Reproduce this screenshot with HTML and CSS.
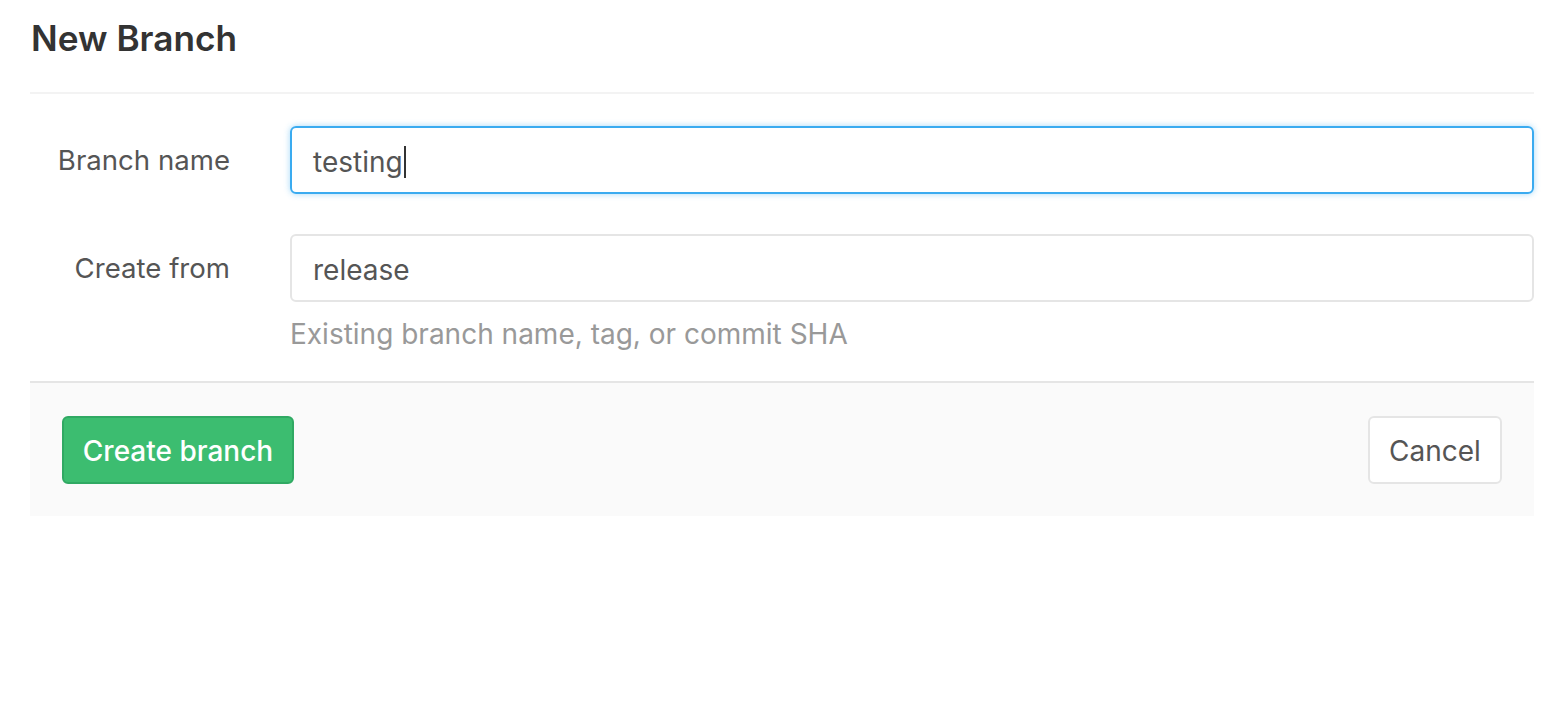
FILE: index.html
```html
<!DOCTYPE html>
<html>
<head>
<meta charset="utf-8">
<link rel="stylesheet" href="styles.css">
</head>
<body>
<div class="page">
  <h3 class="page-title">New Branch</h3>
  <hr class="divider">
  <form class="branch-form">
    <div class="form-group">
      <label class="control-label">Branch name</label>
      <div class="control">
        <div class="input focused"><span>testing</span><span class="caret"></span></div>
      </div>
    </div>
    <div class="form-group last">
      <label class="control-label">Create from</label>
      <div class="control">
        <div class="input"><span>release</span></div>
        <div class="help">Existing branch name, tag, or commit SHA</div>
      </div>
    </div>
    <div class="form-actions">
      <button type="button" class="btn btn-create">Create branch</button>
      <button type="button" class="btn btn-cancel">Cancel</button>
    </div>
  </form>
</div>
</body>
</html>
```

FILE: styles.css
```css
html, body {
  margin: 0;
  padding: 0;
  background: #fff;
}
body {
  font-family: Inter, "Liberation Sans", sans-serif;
  color: #555;
}
.page {
  margin: 0 22px 0 30px;
}
.page-title {
  margin: 0;
  padding-top: 18px;
  height: 56px;
  font-size: 35.2px;
  font-weight: 600;
  line-height: 40px;
  color: #333;
  padding-left: 1px;
}
.divider {
  margin: 18px 0 0;
  border: 0;
  border-top: 2px solid #f3f3f3;
}
.branch-form {
  margin-top: 32px;
}
.form-group {
  display: flex;
  align-items: flex-start;
  margin-bottom: 40px;
}
.form-group.last {
  margin-bottom: 30px;
}
.control-label {
  width: 200px;
  text-align: right;
  font-size: 27.6px;
  line-height: 67px;
  padding-top: 1px;
  color: #555;
  padding-right: 60px;
}
.control {
  flex: 1;
}
.input {
  box-sizing: border-box;
  height: 68px;
  border: 2px solid #e5e5e5;
  border-radius: 6px;
  padding: 3px 21px 0;
  font-size: 28px;
  line-height: 60px;
  color: #555;
  display: flex;
  align-items: center;
}
.input.focused {
  border-color: #3aabf0;
  box-shadow: 0 0 6px rgba(58, 171, 240, 0.45);
}
.caret {
  display: inline-block;
  width: 2px;
  height: 32px;
  background: #333;
  margin-left: 1px;
}
.help {
  margin-top: 15px;
  font-size: 28px;
  line-height: 34px;
  color: #999;
}
.form-actions {
  display: flex;
  justify-content: space-between;
  align-items: center;
  background: #fafafa;
  border-top: 2px solid #e5e5e5;
  padding: 33px 32px 32px;
}
.btn {
  box-sizing: border-box;
  height: 68px;
  border-radius: 6px;
  font-family: Inter, "Liberation Sans", sans-serif;
  font-size: 28px;
  padding: 2px 0 0;
  cursor: pointer;
}
.btn-create {
  background: #3cbd70;
  border: 2px solid #30a963;
  color: #fff;
  font-weight: 500;
  width: 232px;
}
.btn-cancel {
  background: #fff;
  border: 2px solid #e5e5e5;
  color: #555;
  width: 134px;
}
```
